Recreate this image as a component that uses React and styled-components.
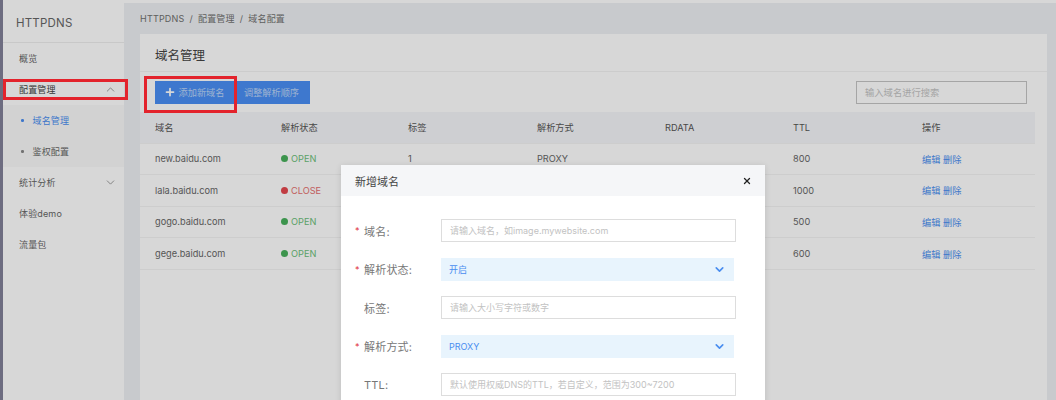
import React from 'react';
import styled, { createGlobalStyle } from 'styled-components';
import { ChevronDown, ChevronUp, Plus, X } from 'lucide-react';

const GlobalStyle = createGlobalStyle`
  html, body {
    margin: 0;
    height: 400px;
    overflow: hidden;
    background: #fff;
    font-family: Inter, "Noto Sans CJK SC", sans-serif;
  }
  * { box-sizing: border-box; }
`;

const Page = styled.div`
  position: relative;
  display: flex;
  width: 1056px;
  height: 400px;
  overflow: hidden;
  padding-top: 3px;
  border-left: 3px solid #6d6c80;
`;

const Sidebar = styled.aside`
  flex: none;
  width: 121px;
  background: #fff;
  font-size: 9px;
  letter-spacing: 0.15px;
`;

const Brand = styled.div`
  display: flex;
  align-items: center;
  height: 40px;
  padding-left: 13px;
  font-size: 11.5px;
  letter-spacing: 0.2px;
  color: #666;
  border-bottom: 1px solid #eee;
`;

const MenuItem = styled.div`
  position: relative;
  display: flex;
  align-items: center;
  justify-content: space-between;
  height: 31px;
  padding: 0 7px 0 16px;
  color: ${p => (p.$open ? '#444' : '#666')};
  svg { color: #888; }
`;

const SubMenu = styled.div`
  background: #fafafa;
`;

const SubItem = styled.div`
  position: relative;
  display: flex;
  align-items: center;
  gap: 9px;
  height: 31px;
  padding-left: 18px;
  color: ${p => (p.$active ? '#4a8ef0' : '#666')};
  &::before {
    content: '';
    width: 2.5px;
    height: 2.5px;
    border-radius: 50%;
    background: ${p => (p.$active ? '#4a8ef0' : '#888')};
  }
  ${p => p.$active && `
    &::after {
      content: '';
      position: absolute;
      left: -3px;
      top: 0;
      bottom: 0;
      width: 3px;
      background: #3f86f0;
    }
  `}
`;

const Main = styled.main`
  flex: 1;
  min-width: 0;
  background: #eef0f3;
  padding: 0 9px 0 16px;
`;

const Breadcrumb = styled.div`
  display: flex;
  align-items: center;
  gap: 5px;
  height: 31px;
  font-size: 9px;
  letter-spacing: 0.2px;
  color: #707070;
`;

const Card = styled.section`
  background: #fff;
  height: 370px;
`;

const CardTitle = styled.h2`
  display: flex;
  align-items: center;
  height: 38px;
  margin: 0;
  padding: 4px 0 0 15px;
  font-size: 12.5px;
  font-weight: 400;
  color: #444;
  border-bottom: 1px solid #f2f2f2;
`;

const Toolbar = styled.div`
  display: flex;
  align-items: center;
  justify-content: space-between;
  height: 40px;
  padding: 0 20px 0 15px;
`;

const ButtonGroup = styled.div`
  display: flex;
`;

const Button = styled.button`
  display: flex;
  align-items: center;
  justify-content: center;
  gap: 3px;
  width: ${p => p.$width}px;
  height: 23px;
  padding: 0;
  border: none;
  background: #4a8ff5;
  color: #bcd5f8;
  font: inherit;
  font-size: 9.2px;
  svg { color: #fff; }
`;

const SearchBox = styled.div`
  display: flex;
  align-items: center;
  width: 171px;
  height: 23px;
  padding-left: 8px;
  border: 1px solid #c4c4c4;
  font-size: 9.3px;
  color: #c4c4c4;
`;

const Table = styled.div`
  width: 895px;
  font-size: 9.2px;
  color: #666;
`;

const Row = styled.div`
  display: grid;
  grid-template-columns: 126px 127px 129px 128px 128px 129px 128px;
  align-items: center;
  height: ${p => (p.$head ? 31.5 : 31.6)}px;
  background: ${p => (p.$head ? '#f5f6f9' : '#fff')};
  color: ${p => (p.$head ? '#555' : '#666')};
  border-bottom: 1px solid #f3f3f3;
`;

const Cell = styled.div`
  padding-left: 15px;
  white-space: nowrap;
`;

const Status = styled.span`
  display: inline-flex;
  align-items: center;
  gap: 3px;
  color: ${p => (p.$open ? '#6cc07a' : '#e6706f')};
  &::before {
    content: '';
    width: 7px;
    height: 7px;
    border-radius: 50%;
    background: ${p => (p.$open ? '#48b05c' : '#e5484f')};
  }
`;

const Links = styled.span`
  color: #4a8ef0;
`;

const Mask = styled.div`
  position: absolute;
  inset: -3px 0 0 -3px;
  background: rgba(0, 0, 0, 0.157);
`;

const Modal = styled.div`
  position: absolute;
  left: 338px;
  top: 165px;
  width: 424px;
  height: 300px;
  background: #fff;
  box-shadow: 0 1px 6px rgba(0, 0, 0, 0.12);
  font-size: 11px;
`;

const ModalHeader = styled.div`
  display: flex;
  align-items: center;
  justify-content: space-between;
  height: 31px;
  padding: 0 13px 0 14px;
  background: #f5f6f8;
  color: #444;
  svg { color: #222; }
`;

const Form = styled.div`
  display: flex;
  flex-direction: column;
  gap: 15.5px;
  padding: 23px 0 0 14px;
`;

const Field = styled.div`
  display: flex;
  align-items: center;
  height: 23px;
`;

const Label = styled.label`
  display: flex;
  align-items: center;
  flex: none;
  width: 86px;
  letter-spacing: 0.2px;
  color: #777;
  &::before {
    content: '*';
    width: 9px;
    font-size: 9px;
    color: ${p => (p.$required ? '#e0303a' : 'transparent')};
  }
`;

const TextInput = styled.div`
  display: flex;
  align-items: center;
  width: 295px;
  height: 23px;
  padding-left: 8px;
  border: 1px solid #ddd;
  font-size: 9px;
  color: #c2c2c2;
  white-space: nowrap;
`;

const SelectBox = styled.div`
  display: flex;
  align-items: center;
  justify-content: space-between;
  width: 293px;
  height: 23px;
  padding: 1px 8px 0;
  background: #e8f4fd;
  font-size: 9px;
  color: #4a8ef0;
`;

const Marker = styled.div`
  position: absolute;
  border: 3px solid #e3232c;
  pointer-events: none;
`;

const SideMarker = styled(Marker)`
  left: 0;
  top: 79px;
  width: 125px;
  height: 21px;
`;

const ButtonMarker = styled(Marker)`
  left: 141px;
  top: 76px;
  width: 93px;
  height: 37px;
`;

const rows = [
  ['new.baidu.com', true, '1', 'PROXY', '800'],
  ['lala.baidu.com', false, '', '', '1000'],
  ['gogo.baidu.com', true, '', '', '500'],
  ['gege.baidu.com', true, '', '', '600'],
];

const headers = ['域名', '解析状态', '标签', '解析方式', 'RDATA', 'TTL', '操作'];

export default function App() {
  return (
    <>
      <GlobalStyle />
      <Page>
        <Sidebar>
          <Brand>HTTPDNS</Brand>
          <MenuItem>概览</MenuItem>
          <MenuItem $open>
            配置管理
            <ChevronUp size={13} strokeWidth={1.5} />
          </MenuItem>
          <SubMenu>
            <SubItem $active>域名管理</SubItem>
            <SubItem>鉴权配置</SubItem>
          </SubMenu>
          <MenuItem>
            统计分析
            <ChevronDown size={13} strokeWidth={1.5} />
          </MenuItem>
          <MenuItem>体验demo</MenuItem>
          <MenuItem>流量包</MenuItem>
        </Sidebar>

        <Main>
          <Breadcrumb>
            <span>HTTPDNS</span>
            <span>/</span>
            <span>配置管理</span>
            <span>/</span>
            <span>域名配置</span>
          </Breadcrumb>
          <Card>
            <CardTitle>域名管理</CardTitle>
            <Toolbar>
              <ButtonGroup>
                <Button $width={78}>
                  <Plus size={12} strokeWidth={3.5} />
                  添加新域名
                </Button>
                <Button $width={77}>调整解析顺序</Button>
              </ButtonGroup>
              <SearchBox>输入域名进行搜索</SearchBox>
            </Toolbar>
            <Table>
              <Row $head>
                {headers.map(h => (
                  <Cell key={h}>{h}</Cell>
                ))}
              </Row>
              {rows.map(([domain, open, tag, mode, ttl]) => (
                <Row key={domain}>
                  <Cell>{domain}</Cell>
                  <Cell>
                    <Status $open={open}>{open ? 'OPEN' : 'CLOSE'}</Status>
                  </Cell>
                  <Cell>{tag}</Cell>
                  <Cell>{mode}</Cell>
                  <Cell />
                  <Cell>{ttl}</Cell>
                  <Cell>
                    <Links>编辑 删除</Links>
                  </Cell>
                </Row>
              ))}
            </Table>
          </Card>
        </Main>

        <Mask />

        <Modal>
          <ModalHeader>
            新增域名
            <X size={10} strokeWidth={3} />
          </ModalHeader>
          <Form>
            <Field>
              <Label $required>域名:</Label>
              <TextInput>{'请输入域名\uFF0C如image.mywebsite.com'}</TextInput>
            </Field>
            <Field>
              <Label $required>解析状态:</Label>
              <SelectBox>
                开启
                <ChevronDown size={13} strokeWidth={3} />
              </SelectBox>
            </Field>
            <Field>
              <Label>标签:</Label>
              <TextInput>请输入大小写字符或数字</TextInput>
            </Field>
            <Field>
              <Label $required>解析方式:</Label>
              <SelectBox>
                PROXY
                <ChevronDown size={13} strokeWidth={3} />
              </SelectBox>
            </Field>
            <Field>
              <Label>TTL:</Label>
              <TextInput>{'默认使用权威DNS的TTL\uFF0C若自定义\uFF0C范围为300~7200'}</TextInput>
            </Field>
          </Form>
        </Modal>

        <SideMarker />
        <ButtonMarker />
      </Page>
    </>
  );
}
